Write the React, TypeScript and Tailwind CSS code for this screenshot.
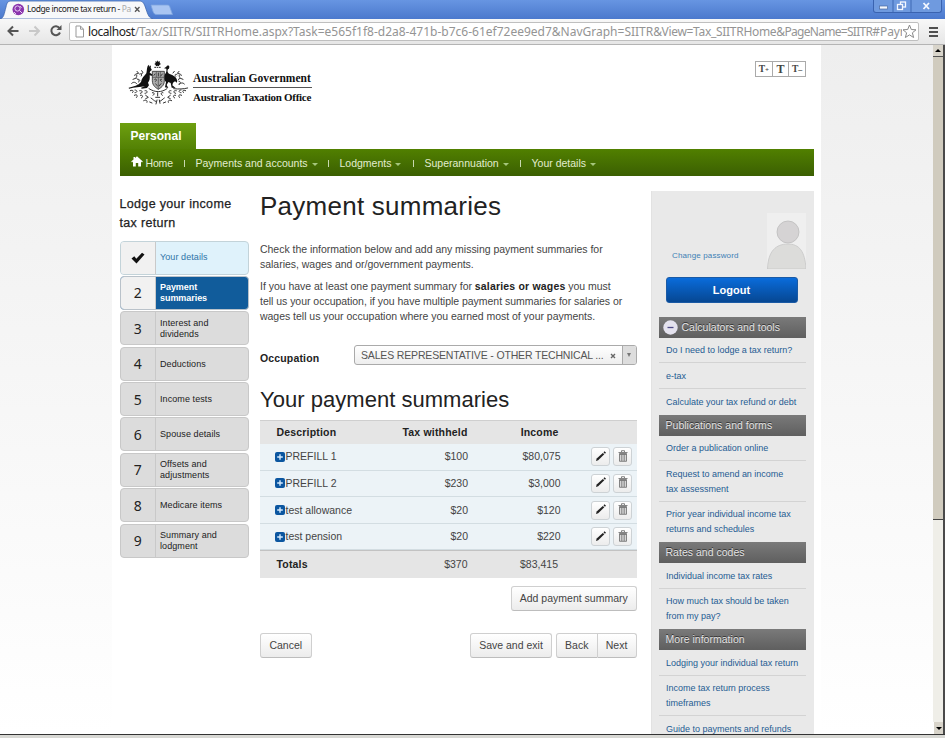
import type { ReactNode } from "react";

const UI = "font-['Liberation_Sans',Arial,sans-serif]";
const HUM = "font-['Noto_Sans',sans-serif]";

function TitleBar() {
  return (
    <div className="relative flex h-[19px] w-full shrink-0 items-end bg-gradient-to-b from-[#6795e2] to-[#4b79cd]">
      <svg className="absolute left-0 top-0" width="180" height="19" viewBox="0 0 180 19">
        <path d="M0 19 C4 18 4 14 6 7 C7 2 8 1 12 1 H139 C143 1 144 3 146 9 C148 15 149 18 153 19 Z" fill="#f7f8fa" stroke="#3f67ae" strokeWidth="0.8" />
        <path d="M151 5 H167 C169 5 169.500 5.500 170.200 8 L172.500 14.500 H157 C154 14.500 153.500 13 152.500 10 Z" fill="#a9c5f2" stroke="#7ea4e0" strokeWidth="0.8" />
        <circle cx="18.300" cy="9.500" r="5.800" fill="#8a35ad" />
        <g stroke="#e7c9f3" fill="none" strokeWidth="1">
          <circle cx="17.500" cy="8.500" r="2.600" />
          <path d="M19.500 10.500 L22 13 M14 12 L16 14 M20 6 L21.500 8" />
        </g>
        <path d="M135 7 L139.500 11.800 M139.500 7 L135 11.800" stroke="#555" strokeWidth="1.300" />
      </svg>
      <div className={`${HUM} relative flex h-[19px] items-center whitespace-pre pl-[27px] text-[8.5px] tracking-[-0.42px] text-[#222]`}>
        Lodge income tax return - <span className="text-[#aaa]">Pa</span>
      </div>
      <div className="absolute right-[3px] top-0 flex h-[13px] w-[69px] rounded-b-[3px] border border-t-0 border-[#3a63b0] bg-[#6f9adf]">
        <svg width="67" height="12" viewBox="0 0 67 12">
          <path d="M19 0 V12 M37 0 V12" stroke="#3f69b4" />
          <rect x="5.500" y="6" width="8" height="3" fill="#f4f8ff" stroke="#48679f" strokeWidth="0.700" />
          <rect x="26.500" y="2" width="5" height="5" fill="none" stroke="#f4f8ff" strokeWidth="1.300" />
          <rect x="23.500" y="4.500" width="5" height="5" fill="#6b8fce" stroke="#f4f8ff" strokeWidth="1.300" />
          <path d="M49.500 3 L55 9 M55 3 L49.500 9" stroke="#f4f8ff" strokeWidth="1.800" />
        </svg>
      </div>
    </div>
  );
}

function Toolbar() {
  return (
    <div className="flex h-[26px] w-full shrink-0 items-center border-b border-[#b4b4b4] bg-gradient-to-b from-[#f8f8f8] to-[#e6e6e6]">
      <svg className="shrink-0" width="69" height="25" viewBox="0 0 69 25">
        <path d="M18.500 12 H9 M13 7.500 L8.500 12 L13 16.500" fill="none" stroke="#555" strokeWidth="2" />
        <path d="M29 12 H38.500 M34.500 7.500 L39 12 L34.500 16.500" fill="none" stroke="#c8c8c8" strokeWidth="2" />
        <path d="M59.500 9 A4.500 4.500 0 1 0 60 13.500" fill="none" stroke="#555" strokeWidth="2" />
        <path d="M61.500 6 V11 H56.500 Z" fill="#555" />
      </svg>
      <div className="mb-px flex h-[19px] w-[850px] shrink-0 items-center rounded-[2px] border border-[#bfbfbf] bg-white">
        <svg className="ml-[5px] shrink-0" width="10" height="13" viewBox="0 0 10 13">
          <path d="M1 1 H5.500 L8.500 4.200 V12 H1 Z M5.500 1 V4.200 H8.500" fill="#fff" stroke="#999" />
        </svg>
        <div className={`${HUM} ml-[3px] mt-px w-[814px] shrink-0 overflow-hidden whitespace-nowrap text-[12px] text-[#949494]`}>
          <span className="tracking-[-0.45px] text-[#222]">localhost</span>/Tax/SIITR/SIITRHome.aspx?Task=e565f1f8-d2a8-471b-b7c6-61ef72ee9ed7&amp;NavGraph=SIITR<span className="tracking-[-0.3px]">&amp;View=Tax_SIITRHome</span><span className="tracking-[-0.7px]">&amp;PageName=SIITR</span><span className="tracking-[-0.1px]">#Payr</span>
        </div>
        <svg className="shrink-0" width="15" height="15" viewBox="0 0 15 15">
          <path d="M7.500 1 L9.300 5.500 L14 5.800 L10.400 8.800 L11.600 13.500 L7.500 10.900 L3.400 13.500 L4.600 8.800 L1 5.800 L5.700 5.500 Z" fill="#fff" stroke="#888" />
        </svg>
      </div>
      <svg className="ml-[9px] shrink-0" width="11" height="12" viewBox="0 0 11 12">
        <path d="M1 2 H10 M1 6 H10 M1 10 H10" stroke="#505050" strokeWidth="2.200" />
      </svg>
    </div>
  );
}

function CoatOfArms() {
  return (
    <svg width="62" height="46" viewBox="0 0 186 138" className="shrink-0">
      <path d="M92 1 L94 5 L99 4 L98 9 L102 12 L97 15 L96 19 L92 17 L87 19 L86 15 L82 12 L86 9 L85 4 L90 5Z" fill="#111" />
      <path d="M82 22 H103" stroke="#222" strokeWidth="3" strokeDasharray="5 2" />
      <path d="M62 18 L66 14 L67 20 L72 16 L71 24 C75 28 76 32 70 33 L68 38 L78 44 L76 48 L68 46 C69 56 68 62 63 68 L66 76 L60 84 L44 86 L42 83 L54 79 C40 82 22 82 6 86 L5 83 C20 80 34 76 42 66 C44 54 52 48 58 40 C60 33 59 26 62 18Z" fill="#111" />
      <path d="M118 20 C120 15 127 16 127 21 L126 26 C122 26 121 30 122 36 C124 42 130 42 137 46 C146 51 152 57 150 68 L144 64 L138 68 L136 76 L146 84 L134 83 L131 69 L124 66 L119 75 L124 84 L114 82 L117 66 C110 60 108 50 114 43 C118 38 119 32 118 26 L111 25Z" fill="#111" />
      <path d="M76 34 H112 V62 C112 78 100 84 94 88 C88 84 76 78 76 62Z" fill="#aaa" stroke="#333" strokeWidth="2.500" />
      <path d="M76 52 H112 M88 34 V52 M100 34 V52 M94 52 V88" stroke="#444" strokeWidth="2" />
      <g fill="none" stroke="#333" strokeWidth="3" strokeLinecap="round">
        <path d="M84 42 l-3 4 m13 -7 v9 m12 -6 l-4 5 M83 58 c4 -4 8 2 3 6 m18 -6 c-4 -4 -7 4 -1 6 M86 72 l5 5 m11 -6 l-5 6" />
        <path d="M30 34 l5 6 -8 2 M22 46 c6 -5 10 0 6 6 M38 42 c5 -3 8 2 5 6 M18 58 l10 -4 6 6 M34 58 c6 0 6 6 0 8 M14 70 c6 -6 12 -3 16 2 M44 32 l4 6 -5 4" />
        <path d="M156 34 l-5 6 8 2 M164 46 c-6 -5 -10 0 -6 6 M150 44 c-5 -3 -8 0 -4 5 M168 58 l-10 -4 -4 6 M156 64 c6 0 6 6 0 8 M172 72 c-6 -6 -12 -3 -16 2 M142 34 l-4 5" />
        <path d="M66 86 C84 98 104 98 120 86 M140 86 C155 88 170 87 182 84" />
        <path d="M10 92 c8 -4 12 2 6 6 M24 90 c8 0 8 8 0 8 M38 92 c8 -2 12 6 2 8 M54 92 c8 -2 10 8 0 8 M176 92 c-8 -4 -12 2 -6 6 M162 90 c-8 0 -8 8 0 8 M148 92 c-8 -2 -12 6 -2 8 M132 92 c-8 -2 -10 8 0 8" />
        <path d="M22 106 c8 -5 12 2 6 7 M40 106 c7 -3 10 5 3 8 M56 106 l8 6 -8 4 M164 106 c-8 -5 -12 2 -6 7 M146 106 c-7 -3 -10 5 -3 8 M130 106 l-8 6 8 4" />
        <path d="M76 98 c6 -3 8 6 2 8 M92 98 v10 M108 98 c-6 -3 -8 6 -2 8 M72 114 c6 4 8 8 14 10 M112 114 c-6 4 -8 8 -14 10 M86 112 h12 M50 122 c8 -4 12 0 10 5 M134 122 c-8 -4 -12 0 -10 5 M90 120 l-3 12 M97 120 l2 10 M68 126 l7 3 M116 126 l-7 3" />
      </g>
    </svg>
  );
}

function Header() {
  return (
    <div className="flex h-[78px] shrink-0 items-start justify-between pl-[15px] pr-[15px] pt-[15px]">
      <div className="flex">
        <CoatOfArms />
        <div className="ml-[4px] mt-[11px] w-[118.500px] whitespace-nowrap font-['Liberation_Serif','Times_New_Roman',serif] text-[11.5px] font-bold text-[#111]">
          <div className="h-[17px] border-b border-[#555] leading-[14px] tracking-[0.03px]">Australian Government</div>
          <div className="mt-[2px] text-[11px] leading-[15px] tracking-[-0.28px]">Australian Taxation Office</div>
        </div>
      </div>
      <div className="mt-px flex h-[16px] w-[51px] divide-x divide-[#aaa] border border-[#aaa] text-center font-['Liberation_Serif',serif] font-bold leading-[14px] text-[#444]">
        <div className="flex-1 whitespace-nowrap text-[9.5px]">T<span className="text-[7px]">+</span></div>
        <div className="flex-1 text-[12px]">T</div>
        <div className="flex-1 whitespace-nowrap text-[9.5px]">T<span className="text-[8px]">–</span></div>
      </div>
    </div>
  );
}

function NavItem({ label, caret = true, className }: { label: string; caret?: boolean; className: string }) {
  return (
    <div className={`flex items-center ${className}`}>
      <span>{label}</span>
      {caret && <span className="ml-[4px] mt-[1px] h-0 w-0 border-x-[3px] border-t-[3px] border-x-transparent border-t-[#a5c67c]" />}
    </div>
  );
}

const Sep = () => <span className="h-[7px] w-px bg-[#c8d8b0]" />;

function Nav() {
  return (
    <div className="shrink-0 pl-[7.500px] pr-[7.500px]">
      <div className="h-[26px] w-[76px] bg-gradient-to-b from-[#6ea010] to-[#538105] pl-[11px] text-[12px] font-bold leading-[26px] tracking-[0.05px] text-white">Personal</div>
      <div className="flex h-[27px] items-center bg-gradient-to-b from-[#518000] to-[#3b5f02] pl-[11px] pt-[2px] text-[10.5px] text-[#e2edd0]">
        <svg width="12" height="11" viewBox="0 0 12 11" className="mb-[4px]">
          <path d="M6 0.300 L11.800 5.500 L11 6.400 L10 5.600 V10.500 H7.200 V7 H4.800 V10.500 H2 V5.600 L1 6.400 L0.200 5.500 L2.500 3.400 V1 H4 V2.100 Z" fill="#fff" />
        </svg>
        <NavItem label="Home" caret={false} className="ml-[3px] w-[38px] tracking-[-0.15px]" />
        <Sep />
        <NavItem label="Payments and accounts" className="ml-[11px] w-[132px]" />
        <Sep />
        <NavItem label="Lodgments" className="ml-[11px] w-[73px]" />
        <Sep />
        <NavItem label="Superannuation" className="ml-[11px] w-[95px]" />
        <Sep />
        <NavItem label="Your details" className="ml-[11px]" />
      </div>
    </div>
  );
}

const steps: string[][] = [
  ["Your details"],
  ["Payment", "summaries"],
  ["Interest and", "dividends"],
  ["Deductions"],
  ["Income tests"],
  ["Spouse details"],
  ["Offsets and", "adjustments"],
  ["Medicare items"],
  ["Summary and", "lodgment"],
];

function Steps() {
  return (
    <div className="w-[129px] shrink-0">
      <div className="mt-[4px] whitespace-nowrap text-[12.5px] leading-[18.500px] tracking-[0.33px] text-[#222] [-webkit-text-stroke:0.25px_#222]">
        Lodge your income<br />tax return
      </div>
      <div className="mt-[8.500px] flex flex-col gap-[1.400px]">
        {steps.map((lines, i) => (
          <div key={i} className={`flex h-[34px] overflow-hidden rounded-[4px] border ${i === 0 ? "border-[#c3d3d9] bg-[#dff2fb]" : i === 1 ? "border-[#b9c2ca] bg-[#115c9b]" : "border-[#c8c8c8] bg-[#dcdcdc]"}`}>
            <div className={`${HUM} flex w-[35.500px] shrink-0 items-center justify-center border-r text-[14px] text-[#222] ${i < 2 ? "border-[#c9c9c9] bg-[#f1f1f1]" : "border-[#c9c9c9]"}`}>
              {i === 0 ? (
                <svg width="14" height="12" viewBox="0 0 14 12">
                  <path d="M0.500 6.500 L3.300 4.300 L5.300 6.800 L11 0.800 L13.500 2.500 L5.500 11.500 Z" fill="#111" />
                </svg>
              ) : (
                i + 1
              )}
            </div>
            <div className={`flex flex-col justify-center whitespace-nowrap pl-[4px] text-[9px] leading-[11px] ${i === 0 ? "tracking-[0.08px] text-[#2f74a8]" : i === 1 ? "pt-px font-bold tracking-[-0.05px] text-white" : "pt-px tracking-[0.08px] text-[#222]"}`}>
              {lines.map((l) => <span key={l}>{l}</span>)}
            </div>
          </div>
        ))}
      </div>
    </div>
  );
}

function Button({ children, className }: { children: ReactNode; className: string }) {
  return (
    <button className={`flex h-[25px] items-center justify-center whitespace-nowrap border border-[#cfcfcf] border-b-[#bdbdbd] bg-gradient-to-b from-white to-[#ececec] text-[10.5px] text-[#444] ${className}`}>
      {children}
    </button>
  );
}

function IconButton({ children }: { children: ReactNode }) {
  return (
    <button className="flex h-[19px] w-[19px] items-center justify-center rounded-[3px] border border-[#cdd2d5] bg-gradient-to-b from-white to-[#ececec] pb-[2px]">
      {children}
    </button>
  );
}

const rows = [
  ["PREFILL 1", "$100", "$80,075"],
  ["PREFILL 2", "$230", "$3,000"],
  ["test allowance", "$20", "$120"],
  ["test pension", "$20", "$220"],
];

function Table() {
  return (
    <div className="w-full text-[10.5px] text-[#444]">
      <div className="flex h-[24.500px] items-center border-t border-[#cfcfcf] bg-[#e5e5e5] font-bold tracking-[0.18px] text-[#222]">
        <span className="w-[107px] pl-[16.500px]">Description</span>
        <span className="w-[100.500px] text-right">Tax withheld</span>
        <span className="w-[91px] text-right">Income</span>
      </div>
      {rows.map((r) => (
        <div key={r[0]} className="flex h-[26.600px] items-center border-b border-[#d3dde2] bg-[#ecf3f7]">
          <span className="flex w-[107px] items-center whitespace-nowrap pl-[15px]">
            <svg width="10" height="10" viewBox="0 0 10 10" className="mr-[0.500px] shrink-0">
              <rect width="10" height="10" rx="2" fill="#0b56a0" />
              <path d="M5 2.200 V7.800 M2.200 5 H7.800" stroke="#d6ecff" strokeWidth="1.400" />
            </svg>
            {r[0]}
          </span>
          <span className="w-[101px] text-right">{r[1]}</span>
          <span className="w-[92.500px] text-right">{r[2]}</span>
          <span className="ml-[30.500px] flex gap-[3px]">
            <IconButton>
              <svg width="12" height="12" viewBox="0 0 12 12">
                <path d="M1 11 L1.700 8.500 L7.800 2.900 L9.300 4.300 L3.200 10.200 Z" fill="#222" />
                <path d="M8.500 2.200 L9.500 1.200 L11 2.700 L9.900 3.700 Z" fill="#222" />
              </svg>
            </IconButton>
            <IconButton>
              <svg width="10" height="12" viewBox="0 0 10 12" fill="none" stroke="#777" strokeWidth="0.900">
                <path d="M3.500 2 V0.700 H6.500 V2 M0.500 2.500 H9.500" />
                <path d="M1.500 3.500 V11.300 H8.500 V3.500 Z M3.800 4 V11 M6.200 4 V11 M1.500 4.500 H8.500" fill="#d6d6d6" />
              </svg>
            </IconButton>
          </span>
        </div>
      ))}
      <div className="flex h-[28px] items-center border-t border-[#c2c2c2] bg-[#e5e5e5]">
        <span className="w-[107px] pl-[16.500px] font-bold tracking-[0.18px] text-[#222]">Totals</span>
        <span className="w-[100.500px] text-right">$370</span>
        <span className="w-[90.500px] text-right">$83,415</span>
      </div>
    </div>
  );
}

function Main() {
  return (
    <div className="ml-[11.500px] flex w-[376.500px] shrink-0 flex-col text-[10.5px] leading-[15px] text-[#444]">
      <h1 className="whitespace-nowrap text-[26px] leading-[30px] tracking-[0.25px] text-[#222]">Payment summaries</h1>
      <p className="mt-[21px] whitespace-nowrap tracking-[-0.025px]">
        Check the information below and add any missing payment summaries for<br />salaries, wages and or/government payments.
      </p>
      <p className="mt-[7px] whitespace-nowrap tracking-[-0.025px]">
        If you have at least one payment summary for <b className="tracking-[0.18px] text-[#222]">salaries or wages</b> you must<br />
        tell us your occupation, if you have multiple payment summaries for salaries or<br />
        wages tell us your occupation where you earned most of your payments.
      </p>
      <div className="mt-[21px] flex items-start">
        <b className="w-[94px] pt-[6px] tracking-[0.15px] text-[#222]">Occupation</b>
        <div className="flex h-[20px] flex-1 items-center overflow-hidden rounded-[3px] border border-[#aaa] bg-gradient-to-b from-white to-[#eee]">
          <span className="w-[255px] whitespace-nowrap pl-[6px] tracking-[-0.16px] text-[#555]">SALES REPRESENTATIVE - OTHER TECHNICAL ...</span>
          <svg width="6" height="6" viewBox="0 0 6 6" className="mt-[2px]"><path d="M1 1 L5 5 M5 1 L1 5" stroke="#666" strokeWidth="1.400" /></svg>
          <span className="ml-auto flex h-full w-[14px] items-center justify-center border-l border-[#aaa] bg-[#ddd]">
            <span className="border-x-[2px] border-t-[4px] border-x-transparent border-t-[#777]" />
          </span>
        </div>
      </div>
      <h2 className="mb-[6px] mt-[20px] whitespace-nowrap text-[22px] leading-[27px] tracking-[0.03px] text-[#222]">Your payment summaries</h2>
      <div className="mt-[0.600px]">
        <Table />
      </div>
      <div className="mt-[7.900px] flex justify-end">
        <Button className="w-[125.500px] rounded-[3px]">Add payment summary</Button>
      </div>
      <div className="mt-[22px] flex">
        <Button className="w-[51.500px] rounded-[3px]">Cancel</Button>
        <Button className="ml-auto w-[82px] rounded-[3px]">Save and exit</Button>
        <Button className="ml-[4px] w-[41.500px] rounded-l-[3px]">Back</Button>
        <Button className="w-[39px] rounded-r-[3px] border-l-0">Next</Button>
      </div>
    </div>
  );
}

const groups: { title: string; links: string[][] }[] = [
  { title: "Calculators and tools", links: [["Do I need to lodge a tax return?"], ["e-tax"], ["Calculate your tax refund or debt"]] },
  { title: "Publications and forms", links: [["Order a publication online"], ["Request to amend an income", "tax assessment"], ["Prior year individual income tax", "returns and schedules"]] },
  { title: "Rates and codes", links: [["Individual income tax rates"], ["How much tax should be taken", "from my pay?"]] },
  { title: "More information", links: [["Lodging your individual tax return"], ["Income tax return process", "timeframes"], ["Guide to payments and refunds"]] },
];

function Aside() {
  return (
    <div className="ml-auto h-[560px] w-[163px] shrink-0 border-l border-[#e2e2e2] bg-[#e9e9e9] pl-[7px] pr-[8px]">
      <div className="flex h-[78px] items-end justify-between">
        <span className="mb-[7px] ml-[13.500px] whitespace-nowrap text-[8px] tracking-[0.14px] text-[#4080b5]">Change password</span>
        <svg width="39" height="56" viewBox="0 0 39 56" className="shrink-0">
          <rect width="39" height="56" fill="#efefef" />
          <path d="M0.500 56 C1 38 9 31 21 31 C32 31 38 38 39 56 Z" fill="#dcdcda" stroke="#c6c6c6" strokeWidth="0.800" />
          <circle cx="21" cy="19" r="11" fill="#d5d3d4" stroke="#bcbcbc" strokeWidth="0.800" />
        </svg>
      </div>
      <div className="ml-[7px] mt-[7.500px] h-[26.500px] w-[132px] rounded-[3px] border border-[#1a5aa5] bg-gradient-to-b from-[#0a6cdb] to-[#064793] text-center text-[11px] font-bold leading-[25px] text-white">Logout</div>
      <div className="mt-[14px]">
        {groups.map((g, gi) => (
          <div key={g.title}>
            <div className="flex h-[20.600px] items-center whitespace-nowrap bg-gradient-to-b from-[#7a7a7a] to-[#5f5f5f] pl-[7px] pt-px text-[10.5px] tracking-[0.02px] text-[#e4e4e4] [text-shadow:0_-1px_0_#333]">
              {gi === 0 && (
                <svg width="15" height="15" viewBox="0 0 15 15" className="-ml-[3px] mb-px mr-[4px]">
                  <circle cx="7.500" cy="7.500" r="7.200" fill="#e4e2ee" />
                  <path d="M4.500 7.500 H10.500" stroke="#4e4a86" strokeWidth="1.300" />
                </svg>
              )}
              {g.title}
            </div>
            {g.links.map((l, i) => (
              <div key={l[0]} className={`flex flex-col whitespace-nowrap pb-[4.400px] pl-[7.500px] pt-[5.600px] text-[9px] leading-[14.800px] tracking-[-0.01px] text-[#1f5c93] ${i < g.links.length - 1 ? "border-b border-[#d3d3d3]" : "border-b border-transparent"}`}>
                {l.map((t) => <span key={t}>{t}</span>)}
              </div>
            ))}
          </div>
        ))}
      </div>
    </div>
  );
}

function ScrollBar() {
  return (
    <div className="ml-auto flex w-[12px] shrink-0 flex-col border-r-2 border-[#4a4a4a] bg-[#efeee8]">
      <div className="flex h-[12px] items-center justify-center border-b border-[#555] bg-[#d8d4ca]">
        <span className="border-x-[3px] border-b-[3px] border-x-transparent border-b-black" />
      </div>
      <div className="h-[463px] border-b border-[#444] bg-[#d0cbbe]" />
      <div className="mt-auto flex h-[12px] items-center justify-center border-l border-[#fff] bg-[#d8d4ca]">
        <span className="border-x-[3px] border-t-[3px] border-x-transparent border-t-black" />
      </div>
    </div>
  );
}

export default function App() {
  return (
    <div className={`${UI} flex h-[738px] w-[945px] flex-col overflow-hidden bg-white`}>
      <TitleBar />
      <Toolbar />
      <div className="flex h-[689px] shrink-0 overflow-hidden bg-gradient-to-b from-[#eeeeee] to-[#ffffff]">
        <div className="ml-[112px] flex h-[689px] w-[709px] flex-col overflow-hidden bg-white">
          <Header />
          <Nav />
          <div className="flex shrink-0 pl-[7.500px] pr-[7.500px] pt-[15px]">
            <Steps />
            <Main />
            <Aside />
          </div>
        </div>
        <ScrollBar />
      </div>
      <div className="h-[4px] border-t border-[#333] bg-[#d8d8d4]" />
    </div>
  );
}
